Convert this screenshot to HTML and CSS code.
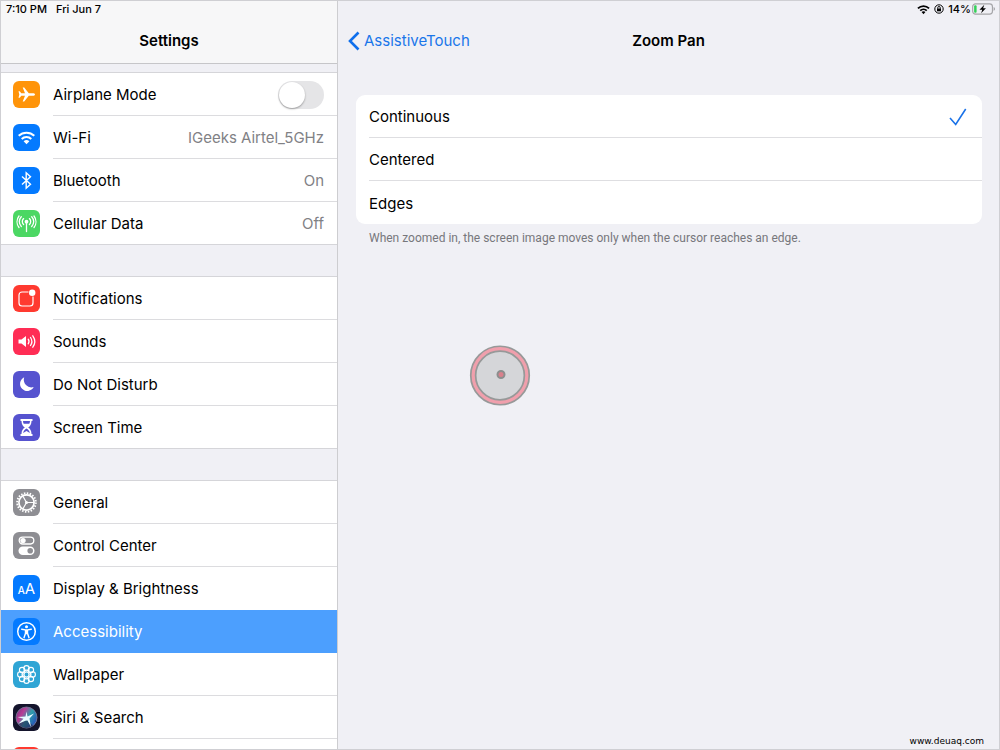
FILE: index.html
```html
<!DOCTYPE html>
<html lang="en">
<head>
<meta charset="utf-8">
<title>Settings</title>
<link rel="stylesheet" href="styles.css">
</head>
<body>
<div class="screen">
  <aside class="sidebar">
    <header class="sidebar-head">
      <div class="status"><span>7:10 PM</span><span>Fri Jun 7</span></div>
      <h1 class="title">Settings</h1>
    </header>
    <nav class="groups">
      <div class="group">
        <div class="row">
          <svg class="icon orange" viewBox="0 0 27 27"><path fill="#fff" d="M22 13.500c0-.8-1-1.300-2.200-1.300h-4L11.200 6.500H9.700l2.300 5.700H8.300L6.700 10.300H5.500l.8 3.200-.8 3.200h1.200l1.600-1.900H12l-2.300 5.700h1.500l4.600-5.700h4c1.200 0 2.200-.5 2.200-1.300z"/></svg>
          <div class="row-body"><label for="airplane">Airplane Mode</label><input class="switch" id="airplane" type="checkbox"></div>
        </div>
        <a class="row" href="#">
          <svg class="icon blue" viewBox="0 0 27 27"><g fill="none" stroke="#fff" stroke-width="2"><path d="M5.700 11.800a11.200 11.200 0 0 1 15.600 0"/><path d="M8.700 14.900a7 7 0 0 1 9.600 0"/></g><path fill="#fff" d="M13.500 20.300l-2.900-3a4.200 4.200 0 0 1 5.800 0z"/></svg>
          <span class="row-body"><span>Wi-Fi</span><span class="value">IGeeks Airtel_5GHz</span></span>
        </a>
        <a class="row" href="#">
          <svg class="icon blue" viewBox="0 0 27 27"><path fill="none" stroke="#fff" stroke-width="1.400" d="M9 9.500l8.500 7.700-4.300 4V5.800l4.300 4L9 17.500"/></svg>
          <span class="row-body"><span>Bluetooth</span><span class="value">On</span></span>
        </a>
        <a class="row" href="#">
          <svg class="icon green" viewBox="0 0 27 27"><g fill="none" stroke="#fff" stroke-width="1.300" stroke-linecap="round"><path d="M10.600 14.600a4.100 4.100 0 0 1 0-6M16.400 14.600a4.100 4.100 0 0 0 0-6M8.300 16.500a7 7 0 0 1 0-9.800M18.700 16.500a7 7 0 0 0 0-9.800M6 17.500a9.500 9.500 0 0 1 0-11.500M21 17.500a9.500 9.500 0 0 0 0-11.500"/><path d="M13.500 12v9.500"/></g><circle cx="13.500" cy="11.700" r="1.900" fill="#fff"/></svg>
          <span class="row-body"><span>Cellular Data</span><span class="value">Off</span></span>
        </a>
      </div>
      <div class="group">
        <a class="row" href="#">
          <svg class="icon red" viewBox="0 0 27 27"><path fill="none" stroke="#fff" stroke-width="1.200" d="M15.500 7H9a3 3 0 0 0-3 3v8a3 3 0 0 0 3 3h8a3 3 0 0 0 3-3v-6.500"/><circle cx="19.200" cy="7.800" r="3.200" fill="#fff"/></svg>
          <span class="row-body">Notifications</span>
        </a>
        <a class="row" href="#">
          <svg class="icon pink" viewBox="0 0 27 27"><path fill="#fff" d="M5.500 11.500h3L13 8v11l-4.500-3.500h-3z"/><g fill="none" stroke="#fff" stroke-width="1.300" stroke-linecap="round"><path d="M15.200 11.200a4 4 0 0 1 0 4.600M17.500 9.500a7 7 0 0 1 0 8M19.800 7.800a10 10 0 0 1 0 11.400"/></g></svg>
          <span class="row-body">Sounds</span>
        </a>
        <a class="row" href="#">
          <svg class="icon indigo" viewBox="0 0 27 27"><path fill="#fff" d="M11.200 6.300a7.200 7.200 0 1 0 9.500 9.700A7.600 7.600 0 0 1 11.200 6.300z"/></svg>
          <span class="row-body">Do Not Disturb</span>
        </a>
        <a class="row" href="#">
          <svg class="icon indigo" viewBox="0 0 27 27"><path fill="#fff" d="M7.500 5h12v2h-1c0 3.500-1.400 5.200-3.300 6.500 1.900 1.300 3.300 3 3.300 6.500h1v2h-12v-2h1c0-3.500 1.400-5.200 3.300-6.500C9.900 12.200 8.500 10.500 8.500 7h-1z"/><path fill="#5653cf" d="M10 7h7c0 1.200-.3 2-.7 2.700h-5.600C10.300 9 10 8.200 10 7zM13.500 14.500c-1.600 1-3 2.300-3.400 4.500l3.400-2 3.400 2c-.4-2.200-1.800-3.500-3.400-4.500z"/></svg>
          <span class="row-body">Screen Time</span>
        </a>
      </div>
      <div class="group">
        <a class="row" href="#">
          <svg class="icon gray" viewBox="0 0 27 27"><g fill="none" stroke="#fff"><circle cx="13.500" cy="13.500" r="9.300" stroke-width="2" stroke-dasharray="1.500 1.422"/><circle cx="13.500" cy="13.500" r="7.600" stroke-width="1.700"/><path stroke-width="1.200" d="M13.500 13.500H21M13.500 13.500L9.800 7M13.500 13.500L9.800 20"/></g><circle cx="13.500" cy="13.500" r="1.500" fill="#fff"/></svg>
          <span class="row-body">General</span>
        </a>
        <a class="row" href="#">
          <svg class="icon gray" viewBox="0 0 27 27"><rect x="6.200" y="5.200" width="14.600" height="6.800" rx="3.400" fill="none" stroke="#fff" stroke-width="1.300"/><circle cx="10" cy="8.600" r="2.700" fill="#fff"/><rect x="5.500" y="14.500" width="16" height="8.500" rx="4.250" fill="#fff"/><circle cx="17.200" cy="18.700" r="2.800" fill="#8e8e93"/></svg>
          <span class="row-body">Control Center</span>
        </a>
        <a class="row before-selected" href="#">
          <span class="icon blue letters"><small>A</small>A</span>
          <span class="row-body">Display &amp; Brightness</span>
        </a>
        <a class="row selected" href="#" aria-current="page">
          <svg class="icon blue" viewBox="0 0 27 27"><circle cx="13.500" cy="13.500" r="8.800" fill="none" stroke="#fff" stroke-width="1.500"/><circle cx="13.500" cy="8.700" r="1.500" fill="#fff"/><path fill="none" stroke="#fff" stroke-width="1.400" stroke-linecap="round" stroke-linejoin="round" d="M8.700 11.200l3.500.7h2.600l3.500-.7M12.500 12v3.200l-1.500 4.500M14.500 12v3.200l1.500 4.500M13.500 12v3.500"/></svg>
          <span class="row-body">Accessibility</span>
        </a>
        <a class="row" href="#">
          <svg class="icon cyan" viewBox="0 0 27 27"><g fill="none" stroke="#fff" stroke-width="1.100"><circle cx="13.500" cy="13.500" r="2.500"/><circle cx="13.500" cy="7.300" r="2.700"/><circle cx="17.900" cy="9.100" r="2.700"/><circle cx="19.700" cy="13.500" r="2.700"/><circle cx="17.900" cy="17.900" r="2.700"/><circle cx="13.500" cy="19.700" r="2.700"/><circle cx="9.100" cy="17.900" r="2.700"/><circle cx="7.300" cy="13.500" r="2.700"/><circle cx="9.100" cy="9.100" r="2.700"/><circle cx="13.500" cy="13.500" r="4.500"/></g></svg>
          <span class="row-body">Wallpaper</span>
        </a>
        <a class="row" href="#">
          <svg class="icon navy" viewBox="0 0 27 27"><defs><linearGradient id="orb" x1="0" y1="0" x2="1" y2="0.600"><stop offset="0" stop-color="#6a2f7c"/><stop offset=".35" stop-color="#b83d96"/><stop offset=".65" stop-color="#2f9faa"/><stop offset="1" stop-color="#2756b8"/></linearGradient></defs><circle cx="13.500" cy="13.500" r="10.500" fill="url(#orb)" stroke="#7c82a0" stroke-width=".8"/><path fill="#1d1b45" opacity=".55" d="M13 15l-8 4.500a10 10 0 0 0 15 2z"/><path fill="#e8fbff" d="M14.500 12.500l6.500-3-4.500 5 1.500 8.500-3.500-6.500-2 .3L5 20l5.500-5.300L4.500 13l8-.5 1-5z"/></svg>
          <span class="row-body">Siri &amp; Search</span>
        </a>
        <div class="row"><span class="icon red"></span></div>
      </div>
    </nav>
  </aside>
  <main class="detail">
    <div class="status status-end">
      <svg width="13" height="11" viewBox="0 0 14 11"><g fill="none" stroke="#000" stroke-width="1.900"><path d="M1 4.200a8.600 8.600 0 0 1 12 0"/><path d="M3.500 6.800a5 5 0 0 1 7 0"/></g><path d="M7 10.500L4.900 8.300a3 3 0 0 1 4.200 0z"/></svg>
      <svg width="10" height="10" viewBox="0 0 10 10"><circle cx="5" cy="5" r="4.200" fill="none" stroke="#000"/><rect x="3" y="4.500" width="4" height="2.800"/><path fill="none" stroke="#000" stroke-width=".9" d="M3.700 4.700V3.800a1.300 1.300 0 0 1 2.600 0v.9"/></svg>
      <span class="percent">14%</span>
      <svg width="24" height="12" viewBox="0 0 25 12"><rect x=".7" y=".7" width="20.600" height="10.600" rx="3" fill="none" stroke="#a5a5a8" stroke-width="1.200"/><path fill="#a5a5a8" d="M22.500 4c2 .6 2 3.400 0 4z"/><rect x="2.200" y="2.200" width="2.600" height="7.600" rx="1" fill="#34d058"/><path d="M12.800 1.500L7.800 6.700h2.900L9.500 10.500l5-5.300h-2.900z"/></svg>
    </div>
    <header class="detail-head">
      <a class="back" href="#"><svg width="12" height="20" viewBox="0 0 12 20"><path fill="none" stroke="#0f6fec" stroke-width="2.600" d="M10.500 1.500L2 10l8.500 8.500"/></svg>AssistiveTouch</a>
      <h2 class="title">Zoom Pan</h2>
    </header>
    <div class="options">
      <label class="option"><span class="option-body"><span>Continuous</span><input class="pick" type="radio" name="pan" checked><svg class="tick" width="18" height="18" viewBox="0 0 18 18"><path fill="none" stroke="#1a72e8" stroke-width="1.600" d="M1 10l5.700 6.500L16.700 1"/></svg></span></label>
      <label class="option"><span class="option-body"><span>Centered</span><input class="pick" type="radio" name="pan"></span></label>
      <label class="option"><span class="option-body"><span>Edges</span><input class="pick" type="radio" name="pan"></span></label>
    </div>
    <p class="note">When zoomed in, the screen image moves only when the cursor reaches an edge.</p>
    <footer class="credit">www.deuaq.com</footer>
  </main>
  <svg class="cursor" viewBox="0 0 62 62"><circle cx="31" cy="31.500" r="26.800" fill="#d5d6d9" stroke="#979999" stroke-width="6.600"/><circle cx="31" cy="31.500" r="26.800" fill="none" stroke="#f09fac" stroke-width="3.200"/><circle cx="32" cy="30.500" r="3.500" fill="#d9808c" stroke="#8c8e8e" stroke-width="2"/></svg>
</div>
</body>
</html>
```
FILE: styles.css
```css
* { box-sizing: border-box; }

body {
  margin: 0;
  font-family: Inter, Roboto, sans-serif;
  font-size: 15px;
  line-height: 20px;
  color: #000;
}

a { color: inherit; text-decoration: none; }

.screen {
  position: relative;
  display: flex;
  height: 100vh;
  overflow: hidden;
  border: 1px solid #cfcfd3;
  background: #f0f0f5;
}

.sidebar {
  flex: 0 0 337px;
  border-right: 1px solid #cdcdd0;
  overflow: hidden;
}

.sidebar-head {
  height: 63px;
  background: #f7f7f8;
  border-bottom: 1px solid #c6c6c9;
}

.status {
  display: flex;
  align-items: center;
  gap: 9px;
  height: 16px;
  padding-left: 5px;
  font-size: 11px;
  line-height: 16px;
  font-weight: 500;
}

.status-end {
  justify-content: flex-end;
  gap: 4px;
  padding: 0 3px 0 0;
}

.percent { margin-right: -3px; }

.title {
  margin: 0;
  padding-top: 14px;
  font-size: 15px;
  line-height: 20px;
  font-weight: 600;
  text-align: center;
}

.groups {
  display: flex;
  flex-direction: column;
  gap: 31px;
  padding-top: 8px;
}

.group {
  background: #fff;
  border-top: 1px solid #d5d5d9;
}

.row {
  display: flex;
  align-items: center;
  gap: 13px;
  height: 43px;
  padding-left: 12px;
}

.row-body {
  flex: 1;
  display: flex;
  align-items: center;
  justify-content: space-between;
  height: 43px;
  padding-top: 2px;
  padding-right: 13px;
  border-bottom: 1px solid #dcdcdf;
}

.group .row:last-child { border-bottom: 1px solid #d5d5d9; }
.group .row:last-child .row-body { border-bottom: 0; }

.value { color: #818185; }

.selected { background: #4c9ffe; color: #fff; }
.selected .row-body,
.before-selected .row-body { border-color: transparent; }

.icon {
  flex: none;
  width: 27px;
  height: 27px;
  border-radius: 6px;
}

.orange { background: #ff9409; }
.blue { background: #047aff; }
.green { background: #4bd763; }
.red { background: #ff3a30; }
.pink { background: #ff2d55; }
.indigo { background: #5653cf; }
.gray { background: #8e8e93; }
.cyan { background: #2fa5d5; }
.navy { background: #14142c; }

.letters {
  display: flex;
  align-items: baseline;
  justify-content: center;
  color: #fff;
  font-size: 15px;
  line-height: 27px;
}

.letters small { font-size: 10px; font-weight: 500; }

.switch {
  appearance: none;
  display: flex;
  width: 46px;
  height: 28px;
  margin: 0;
  padding: 1px;
  border-radius: 14px;
  background: #e5e5e7;
}

.switch::before {
  content: "";
  width: 26px;
  height: 26px;
  border-radius: 50%;
  background: #fff;
  box-shadow: 0 1px 2px #00000055;
}

.switch:checked { justify-content: flex-end; background: #4bd763; }

.detail {
  flex: 1;
  display: flex;
  flex-direction: column;
}

.detail-head {
  display: grid;
  grid-template-columns: 1fr auto 1fr;
  align-items: start;
  padding-left: 10px;
  padding-right: 10px;
}

.back {
  display: flex;
  align-items: center;
  gap: 4px;
  padding-top: 14px;
  color: #1a76ea;
}

.options {
  margin: 44px 17px 0 18px;
  border-radius: 9px;
  background: #fff;
}

.option { display: block; padding-left: 13px; }

.option-body {
  display: flex;
  align-items: center;
  justify-content: space-between;
  height: 43px;
  padding-top: 2px;
  padding-right: 15px;
  border-bottom: 1px solid #dedee1;
}

.option:last-child .option-body { border-bottom: 0; }

.pick {
  appearance: none;
  width: 0;
  height: 0;
  margin: 0 0 0 auto;
}

.note {
  margin: 6px 31px;
  font-family: Roboto, Inter, sans-serif;
  font-size: 12px;
  line-height: 16px;
  color: #77777c;
}

.credit {
  margin-top: auto;
  padding: 0 15px 1px;
  font-family: "DejaVu Sans", sans-serif;
  font-size: 9px;
  line-height: 14px;
  text-align: right;
}

.cursor {
  position: absolute;
  top: 50%;
  left: 50%;
  width: 62px;
  height: 62px;
  margin: -31px;
}
```
